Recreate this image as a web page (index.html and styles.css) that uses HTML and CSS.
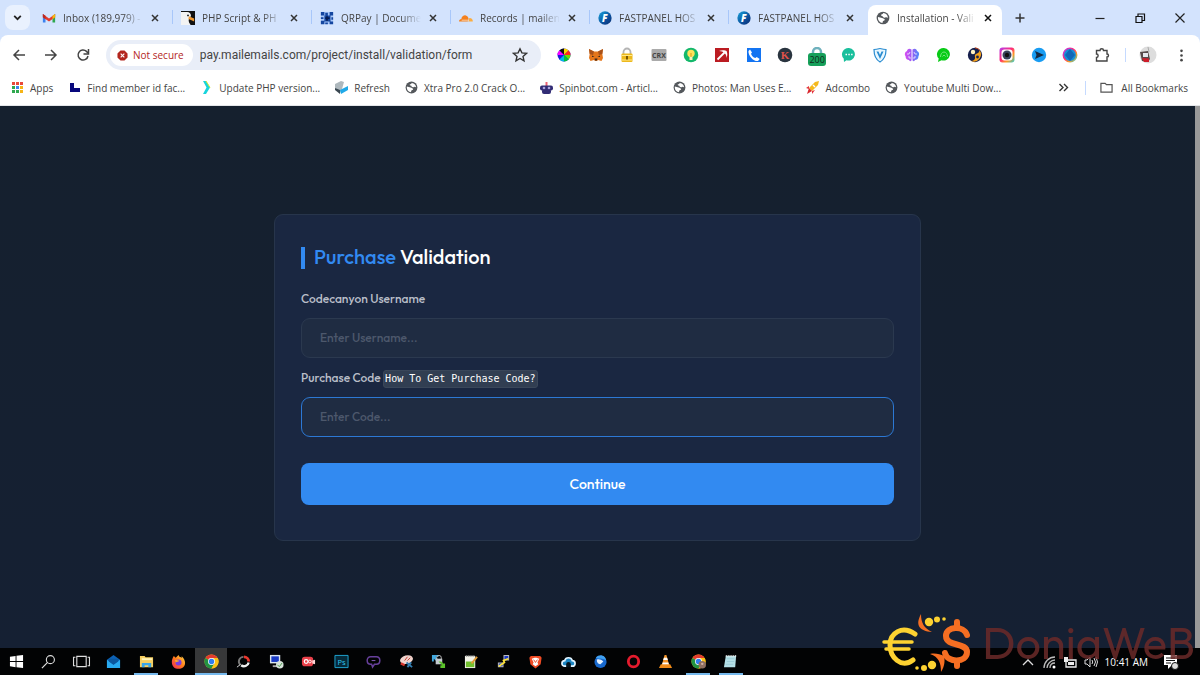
FILE: index.html
```html
<!DOCTYPE html>
<html lang="en">
<head>
<meta charset="utf-8">
<title>Installation - Validation</title>
<link rel="stylesheet" href="styles.css">
</head>
<body>
<svg class="defs" aria-hidden="true">
  <defs>
    <linearGradient id="fp" x1="0" x2="1" y1="0" y2="1"><stop offset="0" stop-color="#1aa5dc"/><stop offset=".6" stop-color="#0b4f9c"/><stop offset="1" stop-color="#0a2c70"/></linearGradient>
    <linearGradient id="ig" x1="0" x2="1" y1="0" y2="1"><stop offset="0" stop-color="#b23df0"/><stop offset=".45" stop-color="#ff2c78"/><stop offset=".7" stop-color="#ff9a1f"/><stop offset="1" stop-color="#25d0d8"/></linearGradient>
    <linearGradient id="brain" x1="0" x2="1"><stop offset="0" stop-color="#d94bf0"/><stop offset=".5" stop-color="#9a5cf5"/><stop offset="1" stop-color="#4a8cf8"/></linearGradient>
    <linearGradient id="fx" x1="1" x2="0" y1="0" y2="1"><stop offset="0" stop-color="#ffe14a"/><stop offset=".5" stop-color="#ff7a1c"/><stop offset="1" stop-color="#f0245e"/></linearGradient>
    <symbol id="close" viewBox="0 0 10 10"><path d="M2 2l6 6M8 2l-6 6" stroke="currentColor" stroke-width="1.5"/></symbol>
    <symbol id="globe" viewBox="1 1 22 22"><circle cx="12" cy="12" r="10" fill="#54585c"/><path fill="#fff" d="M4.200 10.500L9 11.500c2 .4 4 1 5.500 2.500.8 1-.2 2-1.500 2.300-1.200.3-1.500 1.500-1.800 3.600C7 19.500 4 16 4 12zM12.500 4.200c-.5 1.300-1.500 1.800-3 2.300-1 .5-.5 2 .7 2.200 1.500.2 2 .8 1.800 1.800 1.500 1.300 3 1 4.500.5 1.200-.4 2 .5 3.300.7C19.600 8 17 4.700 12.500 4.200z"/></symbol>
    <symbol id="fast" viewBox="0 0 16 16"><circle cx="8" cy="8" r="7.6" fill="url(#fp)"/><text x="4.6" y="12" font-family="Open Sans" font-size="11" font-weight="800" font-style="italic" fill="#fff">F</text></symbol>
    <symbol id="chrome" viewBox="0 0 16 16"><circle cx="8" cy="8" r="7.500" fill="#fbc116"/><path d="M1.500 4.200A7.500 7.500 0 0 1 14.500 4.200L8 8z" fill="#e33b2e"/><path d="M1.500 4.200A7.500 7.500 0 0 0 8 15.500l3-5.500-3-2z" fill="#229342"/><path d="M14.500 4.200H8V8l3 2-3 5.500a7.500 7.500 0 0 0 6.500-11.300z" fill="#fbc116"/><circle cx="8" cy="8" r="3.700" fill="#fff"/><circle cx="8" cy="8" r="2.900" fill="#2f7df0"/></symbol>
  </defs>
</svg>

<header class="browser">
  <div class="tabstrip">
    <button class="tab-search" aria-label="Search tabs"><svg viewBox="0 0 10 10"><path d="M2 3.500l3 3 3-3" fill="none" stroke="#222" stroke-width="1.600"/></svg></button>
    <div class="tabs">
      <div class="tab"><svg class="fav" viewBox="0 0 16 16"><path d="M1 3.500V13h3V7z" fill="#3b82f0"/><path d="M15 3.500V13h-3V7z" fill="#2fa84f"/><path d="M1 3.500l7 5 7-5v3.600l-7 5-7-5z" fill="#e33b2e"/><path d="M1 3.500l3 2v3.800L1 7z" fill="#b92b23"/><path d="M12 5.500l3-2V7l-3 2.300z" fill="#f6b90c"/></svg><span>Inbox (189,979) -</span><button aria-label="Close tab"><svg><use href="#close"/></svg></button></div>
      <div class="tab"><svg class="fav" viewBox="0 0 16 16"><path d="M0 0h16v16H0z" fill="#111"/><path d="M0 1h7c3 0 4.500 2 4.400 4.600L9 9c-1 3 1 5 2 7H0z" fill="#f3f3f3"/><path d="M9 6l6 2.500V12l-3-1.500L8.500 9z" fill="#f19a32"/><circle cx="8" cy="5" r="1" fill="#111"/></svg><span>PHP Script &amp; PH</span><button aria-label="Close tab"><svg><use href="#close"/></svg></button></div>
      <div class="tab"><svg class="fav" viewBox="0 0 16 16"><path d="M1 1h14v14H1z" fill="#a9c8fa"/><path d="M1 1h4v4H1zM6 2h3v3H6zM11 1h4v4h-4zM1 11h4v4H1zM5 5h7v7H5zM1 7h3v2H1zM13 7h2v3h-2zM11 12h4v3h-4zM6 13h3v2H6z" fill="#1446a0"/><path d="M8 6v5M6 8h5" stroke="#061c52" stroke-width="2"/></svg><span>QRPay | Docume</span><button aria-label="Close tab"><svg><use href="#close"/></svg></button></div>
      <div class="tab"><svg class="fav" viewBox="0 0 16 16"><path d="M0 12c0-2 1.200-3 2.700-3 .3-3 3-4.500 5-4 2 .4 3 2 3.300 4L10 12z" fill="#f4811f"/><path d="M10.500 12l1.300-4c2.500-.2 4 1.600 4 4z" fill="#fbad41"/><path d="M3 10.500h8" stroke="#fff" stroke-width=".7"/></svg><span>Records | mailen</span><button aria-label="Close tab"><svg><use href="#close"/></svg></button></div>
      <div class="tab"><svg class="fav"><use href="#fast"/></svg><span>FASTPANEL HOS</span><button aria-label="Close tab"><svg><use href="#close"/></svg></button></div>
      <div class="tab"><svg class="fav"><use href="#fast"/></svg><span>FASTPANEL HOS</span><button aria-label="Close tab"><svg><use href="#close"/></svg></button></div>
      <div class="tab active"><svg class="fav"><use href="#globe"/></svg><span>Installation - Vali</span><button aria-label="Close tab"><svg><use href="#close"/></svg></button></div>
    </div>
    <button class="new-tab" aria-label="New tab"><svg viewBox="0 0 12 12"><path d="M6 1.500v9M1.500 6h9" stroke="#333" stroke-width="1.500"/></svg></button>
    <div class="window-controls">
      <button aria-label="Minimize"><svg viewBox="0 0 12 12"><path d="M1.500 6.500h9" stroke="#222" stroke-width="1.200"/></svg></button>
      <button aria-label="Restore"><svg viewBox="0 0 12 12"><path d="M2 4.500h6v6H2zM4 4.500v-2.500h6.500v6.500H8" fill="none" stroke="#111" stroke-width="1.200"/></svg></button>
      <button aria-label="Close"><svg viewBox="0 0 12 12"><path d="M1.500 1.500l9 9M10.500 1.500l-9 9" stroke="#222" stroke-width="1.200"/></svg></button>
    </div>
  </div>

  <div class="toolbar">
    <div class="nav">
      <button aria-label="Back"><svg viewBox="0 0 14 14"><path d="M13 7H2M7 2L2 7l5 5" fill="none" stroke="#444" stroke-width="1.500"/></svg></button>
      <button aria-label="Forward"><svg viewBox="0 0 14 14"><path d="M1 7h11M7 2l5 5-5 5" fill="none" stroke="#444" stroke-width="1.500"/></svg></button>
      <button aria-label="Reload"><svg viewBox="0 0 14 14"><path d="M12 8a5 5 0 1 1-1.500-4.600L12 5" fill="none" stroke="#444" stroke-width="1.500"/><path d="M12.500 1v5h-5" fill="none" stroke="#444" stroke-width="1.500"/></svg></button>
    </div>
    <div class="omnibox">
      <button class="security"><svg viewBox="0 0 12 12"><path d="M3.800.5h4.400l3.300 3.300v4.400l-3.300 3.300H3.800L.5 8.200V3.800z" fill="#b3261e"/><path d="M4 4l4 4M8 4L4 8" stroke="#fff" stroke-width="1.200"/></svg>Not secure</button>
      <input type="text" aria-label="Address" value="pay.mailemails.com/project/install/validation/form">
      <button class="star" aria-label="Bookmark"><svg viewBox="0 0 16 16"><path d="M8 1.800l1.900 4.100 4.500.5-3.400 3 1 4.400L8 11.500l-4 2.300 1-4.400-3.400-3 4.500-.5z" fill="none" stroke="#333" stroke-width="1.400"/></svg></button>
    </div>
    <div class="extensions">
      <svg viewBox="0 0 16 16"><circle cx="8" cy="8" r="6.500" fill="#1a1ad8"/><path d="M8 8V1.500A6.500 6.500 0 0 1 12.600 3.400z" fill="#ffd500"/><path d="M8 8V1.500A6.500 6.500 0 0 0 3.400 3.400z" fill="#111"/><path d="M8 8L3.400 3.400A6.500 6.500 0 0 0 1.500 8z" fill="#f0f"/><path d="M8 8l4.600-4.600A6.500 6.500 0 0 1 14.500 8z" fill="#ff2a1a"/><path d="M8 8h6.500a6.500 6.500 0 0 1-1.900 4.600z" fill="#6be000"/><path d="M8 8l4.600 4.600A6.500 6.500 0 0 1 8 14.500z" fill="#00c43c"/><path d="M8 8v6.500a6.500 6.500 0 0 1-4.600-1.900z" fill="#00b8e8"/></svg>
      <svg viewBox="0 0 16 16"><path d="M1 2l5 2.500h4L15 2l-.7 5 .7 4-1.500 3-3.500-1-1 1H7l-1-1-3.500 1L1 11l.7-4z" fill="#e4761b"/><path d="M1 2l5 2.500L5 8 1.700 7zM15 2l-5 2.500 1 3.500 3.300-1z" fill="#a8511a"/><path d="M4 8.500l2.500 1.500L4 10zM12 8.500L9.500 10l2.500 0zM6.500 11.500h3l-.5 2H7z" fill="#3b2b25"/></svg>
      <svg viewBox="0 0 16 16"><path d="M4.500 8V5a3.500 3.500 0 0 1 7 0v3" fill="none" stroke="#b4b4b4" stroke-width="1.800"/><rect x="2.500" y="6.500" width="11" height="8.500" rx="1" fill="#edb91c"/><path d="M3 8.500h10M3 13h10" stroke="#ffe889"/><path d="M8 9v3.500" stroke="#6a4b00" stroke-width="1.800"/></svg>
      <svg viewBox="0 0 16 16"><rect x=".5" y="2" width="15" height="12" rx="1" fill="#aaa"/><text x="8" y="11" text-anchor="middle" font-family="Open Sans" font-size="7" font-weight="700" fill="#444">CRX</text></svg>
      <svg viewBox="0 0 16 16"><circle cx="8" cy="8" r="7.300" fill="#14b86b"/><circle cx="8" cy="6.500" r="3.700" fill="#ffe25a"/><path d="M6.500 9.500h3V13h-3z" fill="#f7f0ba"/><path d="M8 6v4" stroke="#e09b16"/></svg>
      <svg viewBox="0 0 16 16"><path d="M1 1h14v14H1z" fill="#bb1c22"/><path d="M3.500 12.500l7-7" stroke="#fff" stroke-width="1.800"/><path d="M5 4c3-1.500 7-.5 7.500 0s1.500 4 0 7c.3-4-3-7-7.500-7z" fill="#fff"/></svg>
      <svg viewBox="0 0 16 16"><path d="M1 1h14v14H1z" fill="#1374f2"/><path d="M4 2.500l2 3-1 1.200c.8 2.200 2.200 3.500 4.400 4.400l1.300-1 3 2-1.700 2C7.500 14.500 2 9 2.500 4z" fill="#fff"/></svg>
      <svg viewBox="0 0 16 16"><circle cx="8" cy="8" r="7.300" fill="#29343f"/><text x="8" y="12" text-anchor="middle" font-family="Liberation Serif" font-size="11" font-weight="700" fill="#e0524a">K</text></svg>
      <span class="badged"><svg viewBox="0 0 16 16"><path d="M4 8V5a4 4 0 0 1 8 0v3" fill="none" stroke="#6fb1bd" stroke-width="2.500"/></svg><b>200</b></span>
      <svg viewBox="0 0 16 16"><path d="M8 1a6.500 6.300 0 1 1-2.500 12.300L3 15l-.3-3.500A6.500 6.300 0 0 1 8 1z" fill="#19bf9c"/><path d="M4.500 7.500h1.500M7.300 7.500h1.500M10.100 7.500h1.500" stroke="#fff" stroke-width="1.300"/></svg>
      <svg viewBox="0 0 16 16"><path d="M2 2.500c4 0 5-1 6-1s2 1 6 1C14 9 11.500 13 8 15 4.500 13 2 9 2 2.500z" fill="#e8f7ff" stroke="#288bd0" stroke-width="1.200"/><path d="M4.500 4.500L8 12l3.500-7.500H9.500L8 8 6.500 4.500z" fill="#288bd0"/></svg>
      <svg viewBox="0 0 16 16"><path d="M7.500 2.500C5 .5 3 2.500 3 4 .5 5 .5 8 1.500 9c0 3 2 4 3.500 4 1 2 2.500 1 2.500 0zM8.500 2.500C11 .5 13 2.500 13 4c2.500 1 2.500 4 1.500 5 0 3-2 4-3.500 4-1 2-2.500 1-2.500 0z" fill="url(#brain)"/><path d="M3 7h2l1-2M4 10h2v2M13 7h-2l-1-2M12 10h-2v2" fill="none" stroke="#fff" stroke-width=".7"/></svg>
      <svg viewBox="0 0 16 16"><path d="M8 1a6.500 6.300 0 1 1-2.500 12.300L2 15l.7-3.500A6.500 6.300 0 0 1 8 1z" fill="#09cb17"/><path d="M4.500 10c0-3 1.500-5 3.500-5s3.500 2 3.500 5M6.500 9.500L8 8l1.500 1.500" fill="none" stroke="#7fe986" stroke-width=".9"/></svg>
      <svg viewBox="0 0 16 16"><circle cx="8" cy="8" r="7.200" fill="#17204d"/><path d="M12.500 3A7.200 7.200 0 0 1 4 14c3 0 4.500-2 4-4-.4-1.700 0-3 2-3.500 1.500-.5 2.500-1.500 2.500-3.500z" fill="#f5a21c"/><path d="M8 .8a7.200 7.200 0 0 1 4.500 2.200" stroke="#d04a1c" fill="none"/><circle cx="6" cy="5" r="2.200" fill="#fff0c0"/><circle cx="10.500" cy="10" r="1.400" fill="#17204d"/></svg>
      <svg viewBox="0 0 16 16"><rect x=".5" y=".5" width="15" height="15" rx="3" fill="url(#ig)"/><rect x="2.500" y="2.500" width="11" height="11" rx="3" fill="#fff"/><circle cx="8" cy="8" r="4.500" fill="#39445c"/><circle cx="8" cy="8" r="2.200" fill="#111"/></svg>
      <svg viewBox="0 0 16 16"><circle cx="8" cy="8" r="7.200" fill="#189cf2"/><path d="M4 4l9 4-9 4 1.500-4z" fill="#132a44"/></svg>
      <svg viewBox="0 0 16 16"><circle cx="8" cy="8" r="6.700" fill="#1590d7" stroke="url(#ig)" stroke-width="1.500"/><path d="M8 2l5 6-5 6-5-6z" fill="#1167b7"/></svg>
      <svg viewBox="0 0 16 16"><path d="M2.500 3.500H6c0-2.300 3.500-2.300 3.500 0H13V7c2 0 2 3 0 3v4H2.500v-3.500c2.200 0 2.200-3.500 0-3.500z" fill="none" stroke="#444" stroke-width="1.400"/></svg>
    </div>
    <div class="profile">
      <svg class="avatar" viewBox="0 0 18 18"><circle cx="9" cy="9" r="8.500" fill="#ddd"/><path d="M1 6l8-1 2 8-2 3-6-1z" fill="#574b4b"/><path d="M4 7h5v4H4z" fill="#e5e8ed"/><path d="M3 12l7 .5V16l-5 0z" fill="#ce1d2a"/><path d="M9 1l1 5" stroke="#aaa"/></svg>
      <button aria-label="Menu"><svg viewBox="0 0 14 14"><circle cx="7" cy="2" r="1.400"/><circle cx="7" cy="7" r="1.400"/><circle cx="7" cy="12" r="1.400"/></svg></button>
    </div>
  </div>

  <nav class="bookmarks">
    <a href="#"><svg viewBox="0 0 13 13"><path d="M1 1h3v3H1zM5 1h3v3H5zM9 1h3v3H9z" fill="#e9483b"/><path d="M1 5h3v3H1z" fill="#2fa84f"/><path d="M5 5h3v3H5z" fill="#3d84f0"/><path d="M9 5h3v3H9zM9 9h3v3H9z" fill="#f6b416"/><path d="M1 9h3v3H1zM5 9h3v3H5z" fill="#2fa84f"/></svg><span>Apps</span></a>
    <a href="#"><svg viewBox="0 0 13 13"><path d="M2 2h4v5h6v4H2z" fill="#08087c"/></svg><span class="long">Find member id fac...</span></a>
    <a href="#"><svg viewBox="0 0 13 13"><path d="M3 0h3l4 6.500L6 13H3l3.500-6.500z" fill="#17d4dc"/><path d="M6 0l4 6.500" stroke="#d6e829"/></svg><span class="long">Update PHP version...</span></a>
    <a href="#"><svg viewBox="0 0 13 13"><path d="M0 3l6-3 3 1-2 7-2 4-5-5z" fill="#aeb8bd"/><path d="M0 7l5 2v4L0 9z" fill="#394650"/><path d="M5 9l8-4v4l-7 4z" fill="#20a9e8"/></svg><span>Refresh</span></a>
    <a href="#"><svg><use href="#globe"/></svg><span class="long">Xtra Pro 2.0 Crack O...</span></a>
    <a href="#"><svg viewBox="0 0 13 13"><path d="M6.500 1v4" stroke="#ec6475" stroke-width="2"/><rect x="0" y="4.500" width="13" height="5" rx="2" fill="#322c75"/><rect x="2" y="8" width="9" height="5" rx="2" fill="#322c75"/><circle cx="4" cy="7" r="1.300" fill="#aaa3dd"/><circle cx="9" cy="7" r="1.300" fill="#aaa3dd"/></svg><span class="long">Spinbot.com - Articl...</span></a>
    <a href="#"><svg><use href="#globe"/></svg><span class="long">Photos: Man Uses E...</span></a>
    <a href="#"><svg viewBox="0 0 13 13"><path d="M13 0L9 1 3 7l3 3 6-6z" fill="#f5b91d"/><path d="M3 5L0 7l3 1zM6 10l0 3 3-4z" fill="#e4313c"/><path d="M3 7l3 3-5 3z" fill="#d9272f"/><path d="M7 4l2 2" stroke="#fff" stroke-width="1.500"/></svg><span>Adcombo</span></a>
    <a href="#"><svg><use href="#globe"/></svg><span class="long">Youtube Multi Dow...</span></a>
    <button class="more" aria-label="More bookmarks"><svg viewBox="0 0 13 13"><path d="M2.500 3l3.500 3.500L2.500 10M7 3l3.500 3.500L7 10" fill="none" stroke="#333" stroke-width="1.400"/></svg></button>
    <a href="#" class="all"><svg viewBox="0 0 14 13"><path d="M1 2h4.500L7 3.500h6v8H1z" fill="none" stroke="#555" stroke-width="1.300"/></svg><span>All Bookmarks</span></a>
  </nav>
</header>

<main class="page">
  <form class="card">
    <h1><em>Purchase</em> Validation</h1>
    <label for="username">Codecanyon Username</label>
    <input id="username" type="text" placeholder="Enter Username...">
    <label for="code">Purchase Code <code>How To Get Purchase Code?</code></label>
    <input id="code" class="focused" type="text" placeholder="Enter Code...">
    <button type="button">Continue</button>
  </form>
</main>

<footer class="taskbar">
  <div class="apps">
    <button aria-label="Start"><svg viewBox="0 0 16 16"><path d="M1 3l6-1v5.500H1zM8 1.900L15 1v6.500H8zM1 8.500h6V14l-6-1zM8 8.500h7V15l-7-.9z" fill="#fff"/></svg></button>
    <button aria-label="Search"><svg viewBox="0 0 16 16"><circle cx="10" cy="6" r="4.300" fill="none" stroke="#ddd" stroke-width="1.200"/><path d="M7 9l-6 6" stroke="#ddd" stroke-width="1.300"/></svg></button>
    <button aria-label="Task view"><svg class="wide" viewBox="0 0 20 16"><path d="M5 2.500h10v11H5zM3.500 3.500h-2v9h2M16.500 3.500h2v9h-2" fill="none" stroke="#ddd" stroke-width="1.200"/></svg></button>
    <button aria-label="Mail"><svg viewBox="0 0 16 16"><path d="M1 6l7-5 7 5v9H1z" fill="#0c61b4"/><path d="M1 6l7 5.500L15 6v9H1z" fill="#28aaf0"/><path d="M3 5h10v3l-5 3.500L3 8z" fill="#0b579e"/></svg></button>
    <button aria-label="Explorer" class="open"><svg viewBox="0 0 16 16"><path d="M1 2h5l1 1.500h8V14H1z" fill="#f5cf61"/><path d="M3 4.500h11v2H3z" fill="#fff3b8"/><path d="M3 14V9.500h10V14h-3v-2H6v2z" fill="#37a5e9"/></svg></button>
    <button aria-label="Firefox"><svg viewBox="0 0 16 16"><path d="M3 2l2 2 3-3 1 2 3 1-1-2c4 3 5 8 3 11-3 4-9 3-11 1C-.5 10 1 5 3 2z" fill="url(#fx)"/><circle cx="8" cy="9" r="3.200" fill="#7a3ee0"/><path d="M4 6c3 0 3 1 5 1-1 2-3 1-4 2" fill="#ffae22"/></svg></button>
    <button aria-label="Chrome" class="open current"><svg><use href="#chrome"/></svg></button>
    <button aria-label="Media recorder"><svg viewBox="0 0 16 16"><path d="M4.500 11.500A5 5 0 0 1 8 3" fill="none" stroke="#777" stroke-width="2"/><path d="M8.500 3a5 5 0 0 1 5 5" fill="none" stroke="#e8372e" stroke-width="3"/><path d="M13.500 9a5 5 0 0 1-8 3" fill="none" stroke="#eee" stroke-width="2.500"/><path d="M1 14l4-3" stroke="#ddd"/></svg></button>
    <button aria-label="Remote desktop"><svg viewBox="0 0 16 16"><path d="M1 1h11v9H1z" fill="#dce6ee"/><path d="M2.500 2.500h8v6h-8z" fill="#193ac5"/><path d="M4 12h6v2H4z" fill="#aaa"/><circle cx="11.500" cy="11.500" r="4" fill="#d8e4dc"/><path d="M9 11.500l2 2 3-4" fill="none" stroke="#4a9b4a"/></svg></button>
    <button aria-label="Screen recorder"><svg viewBox="0 0 16 16"><rect x="1" y="3" width="12" height="10" rx="3" fill="#e9404a"/><path d="M12 7l3-1v5l-3-1z" fill="#ffd6d6"/><circle cx="5.500" cy="8" r="2" fill="none" stroke="#fff" stroke-width="1.300"/><circle cx="9.500" cy="8" r="1.500" fill="none" stroke="#fff"/></svg></button>
    <button aria-label="Photoshop"><svg viewBox="0 0 16 16"><path d="M1 1.500h14v13H1z" fill="#052a3a" stroke="#20aad7"/><text x="8" y="11.500" text-anchor="middle" font-family="Open Sans" font-size="8" fill="#31c5f0">Ps</text></svg></button>
    <button aria-label="Chat"><svg viewBox="0 0 16 16"><path d="M5 3h6c5 0 5 8 0 8H9l-2 3-1-3H5C0 11 0 3 5 3z" fill="none" stroke="#67409b" stroke-width="1.600"/><path d="M6 7h4" stroke="#8d61c2"/></svg></button>
    <button aria-label="Snipping tool"><svg viewBox="0 0 16 16"><ellipse cx="8" cy="6" rx="7" ry="4.500" fill="#f0d3cc" transform="rotate(-15 8 6)"/><path d="M6 7l3-4M9 7l3-3" stroke="#c43c32" fill="none"/><path d="M8 9l6 5M13 9l-4 5" stroke="#347eb1" stroke-width="2"/><path d="M2 10l4 2" stroke="#d6342b" stroke-width="2.500"/></svg></button>
    <button aria-label="Transfer"><svg viewBox="0 0 16 16"><path d="M1 1h7v2H5l3 3-2 2-3-3v3H1z" fill="#42a9df"/><path d="M5 5h7v6H5z" fill="#c5cbd1"/><path d="M6 6V4a2 2 0 0 1 5 0v2" fill="none" stroke="#bbb"/><path d="M8 8l4 4h-2v3h5v-5h-2l-2-2z" fill="#5bc32b"/></svg></button>
    <button aria-label="Notepad editor"><svg viewBox="0 0 16 16"><path d="M1 2h11v13H1z" fill="#f2f2e9"/><path d="M2 8h9v6H2z" fill="#72c02f"/><path d="M2 2h10" stroke="#777" stroke-width="2" stroke-dasharray="1 1"/><path d="M8 10l6-7" stroke="#e09a34" stroke-width="2"/></svg></button>
    <button aria-label="Terminal session"><svg viewBox="0 0 16 16"><path d="M8 1h6v6H8zM2 9h6v5H2z" fill="#bbb"/><path d="M9 2h4v4H9zM3 10h4v3H3z" fill="#1939c9"/><path d="M13 5L8 7l1 2-6 4" fill="none" stroke="#ffe43a" stroke-width="1.800"/></svg></button>
    <button aria-label="Brave"><svg viewBox="0 0 16 16"><path d="M3 2h10l1.500 2-1 7L8 15.500 2.500 11l-1-7z" fill="#f04b24"/><path d="M4 5l3-1h2l3 1-2 4 1 2-3 2-3-2 1-2z" fill="#fff"/><path d="M6 6l2 3 2-3" fill="none" stroke="#f04b24"/></svg></button>
    <button aria-label="Cloud"><svg viewBox="0 0 16 16"><path d="M4 13a3 3 0 0 1 0-6c1-4 7-4 8 0a3 3 0 0 1 0 6z" fill="#1c86c4" stroke="#e3f4ff" stroke-width="1.800"/><path d="M5.500 14V11a2.500 2.500 0 0 1 5 0v3z" fill="#05131c"/></svg></button>
    <button aria-label="Thunderbird"><svg viewBox="0 0 16 16"><circle cx="8" cy="8.500" r="6.500" fill="#1869ce"/><path d="M4 6c2-1 5 0 7 2l-3 3c-2 0-4-2-4-5z" fill="#e6f2ff"/><path d="M3 4c4-5 11-2 11 3-3-3-6-1-11-3z" fill="#3fa0f2"/></svg></button>
    <button aria-label="Opera"><svg viewBox="0 0 16 16"><ellipse cx="8" cy="8" rx="5.500" ry="5.800" fill="none" stroke="#e41b2d" stroke-width="3"/></svg></button>
    <button aria-label="VLC"><svg viewBox="0 0 16 16"><path d="M3 11h10l2 4H1z" fill="#f08a18"/><path d="M7 1h2l3 11H4z" fill="#f3942a"/><path d="M6.300 4h3.400l.8 2.500h-5zM5 9h6l.6 2H4.400z" fill="#fff"/></svg></button>
    <button aria-label="Chrome profile" class="open"><svg viewBox="0 0 16 16"><use href="#chrome"/><circle cx="12" cy="11.500" r="4" fill="#8d6e60"/><circle cx="12" cy="10.500" r="1.300" fill="#d0aea0"/></svg></button>
    <button aria-label="Notepad" class="open"><svg viewBox="0 0 16 16"><path d="M3 2h11l-1 12H1z" fill="#b4dfe6"/><path d="M4 5h8M4 8h8M3 11h8" stroke="#9cccd6"/><path d="M3 2h11" stroke="#eee" stroke-width="2" stroke-dasharray="1 1"/></svg></button>
  </div>
  <div class="tray">
    <svg viewBox="0 0 14 14"><path d="M2 10l5-5 5 5" fill="none" stroke="#ddd" stroke-width="1.300"/></svg>
    <svg viewBox="0 0 14 14"><path d="M2 13C2 7 7 2 13 2M5 13c0-4 4-8 8-8M8 13c0-3 2-5 5-5" fill="none" stroke="#bbb" stroke-width="1.300"/><circle cx="12" cy="12" r="1.500" fill="#fff"/></svg>
    <svg viewBox="0 0 14 14"><path d="M3 5h10v7H3z" fill="none" stroke="#eee" stroke-width="1.300"/><path d="M5 7h6v3H5zM1 2h4v5H1z" fill="#eee"/></svg>
    <svg viewBox="0 0 14 14"><path d="M1 5h2l3-3v10L3 9H1z" fill="none" stroke="#ddd"/><path d="M8 5q1.500 2 0 4M10 3q3 4 0 8M12 2q3 5 0 10" fill="none" stroke="#ddd"/></svg>
    <time>10:41 AM</time>
    <svg class="notice" viewBox="0 0 16 16"><path d="M1 1h13v10H9l-4 4v-4H1z" fill="#fff"/><path d="M3 4h9M3 6.500h9M3 9h5" stroke="#111"/><circle cx="12" cy="12" r="3.500" fill="#ddd" stroke="#111"/></svg>
  </div>
</footer>

<div class="watermark">
  <svg viewBox="0 0 90 60" aria-hidden="true">
    <g fill="none" stroke-linecap="round">
      <path d="M33 21C20 12 8 20 8 32s11 24 23 15" stroke="#fdd231" stroke-width="5"/>
      <path d="M2 29h28M4 36h23" stroke="#fdd231" stroke-width="3.500"/>
      <path d="M85 22c-3-10-21-9-21 1 0 11 21 6 21 16 0 11-20 11-22 1M75 12V9M75 49v4" stroke="#f56e22" stroke-width="6"/>
    </g>
    <path d="M39 1c-6 11-2 17 11 18-8-4-11-9-11-18z" fill="#f56e22"/>
    <path d="M48 41c9 3 11 9 11 18 4-6 4-12 3-16-4-2-9-3-14-2z" fill="#f56e22"/>
    <g fill="#fdd231"><circle cx="47" cy="9" r="4.200"/><circle cx="55" cy="6.500" r="3"/><circle cx="62" cy="6" r="1.800"/><circle cx="50" cy="52" r="4.200"/><circle cx="42" cy="55" r="3"/><circle cx="35" cy="55" r="1.800"/></g>
  </svg>
  <span>DoniaWeB</span>
</div>
</body>
</html>
```
FILE: styles.css
```css
* { box-sizing: border-box; }

body {
  margin: 0;
  min-height: 100vh;
  display: flex;
  flex-direction: column;
  position: relative;
  background: #152031;
  font-family: "Open Sans", "Noto Sans", sans-serif;
  font-size: 10px;
  color: #444;
}

button {
  border: 0;
  padding: 0;
  background: none;
  color: inherit;
  font: inherit;
  display: flex;
  align-items: center;
  justify-content: center;
}

svg { display: block; flex: none; }
.defs { position: absolute; width: 0; height: 0; }

/* Browser frame */
.browser { background: #d3e3fd; }

.tabstrip {
  display: flex;
  align-items: center;
  height: 35px;
  padding-left: 5px;
}

.tab-search {
  width: 25px;
  height: 25px;
  border-radius: 8px;
  background: #e9f1fe;
}
.tab-search svg { width: 11px; height: 11px; }

.tabs {
  display: flex;
  align-self: stretch;
  flex: 0 1 972px;
  padding-left: 4px;
  min-width: 0;
}

.tab {
  flex: 0 1 139px;
  min-width: 0;
  display: flex;
  align-items: center;
  gap: 7px;
  padding: 0 13px 5px 8px;
  margin-top: 5px;
  background: linear-gradient(#a8c7fa, #a8c7fa) right 0 top 5px / 1px 14px no-repeat;
}
.tab span {
  flex: 1;
  min-width: 0;
  overflow: hidden;
  white-space: nowrap;
  mask-image: linear-gradient(to right, #000 75%, transparent);
}
.tab button, .tab button svg { width: 10px; height: 10px; }
.tab button { color: #333; }
.fav { width: 14px; height: 14px; }
.tab.active {
  flex-basis: 134px;
  padding-right: 9px;
  background: #fff;
  border-radius: 8px 8px 0 0;
}
.tab.active button { color: #111; }
.tab:nth-last-child(2) { background: none; }

.new-tab { width: 35px; height: 25px; }
.new-tab svg, .window-controls svg { width: 12px; height: 12px; }
.window-controls { display: flex; margin-left: auto; align-self: stretch; }
.window-controls button { width: 40px; }

.toolbar {
  display: flex;
  align-items: center;
  height: 40px;
  padding: 0 9px 0 3px;
  background: #fff;
  border-radius: 8px 8px 0 0;
}
.nav { display: flex; margin-right: 7px; }
.nav button { width: 32px; height: 30px; }
.nav svg { width: 14px; height: 14px; }

.omnibox {
  flex: 1;
  min-width: 0;
  display: flex;
  align-items: center;
  height: 30px;
  padding: 0 13px 0 4px;
  border-radius: 15px;
  background: #e9eef8;
}
.security {
  height: 22px;
  padding: 0 9px 0 7px;
  gap: 5px;
  border-radius: 11px;
  background: #fff;
  color: #b3261e;
  white-space: nowrap;
}
.security svg { width: 11px; height: 11px; }
.omnibox input {
  flex: 1;
  min-width: 0;
  border: 0;
  padding: 0 0 0 7px;
  background: none;
  font-family: Roboto, sans-serif;
  font-size: 12px;
  color: #444;
}
.star svg { width: 16px; height: 16px; }

.extensions {
  flex: 0 1 554px;
  display: flex;
  justify-content: space-between;
  margin: 0 15px;
}
.extensions svg { width: 16px; height: 16px; }
.badged { position: relative; width: 16px; }
.badged b {
  position: absolute;
  top: 6px;
  left: -1px;
  width: 18px;
  border-radius: 3px;
  background: #16a05a;
  color: #10281a;
  font-size: 9px;
  font-weight: 400;
  line-height: 13px;
  text-align: center;
}

.profile {
  display: flex;
  align-items: center;
  gap: 14px;
  padding-left: 14px;
  background: linear-gradient(#c5daff, #c5daff) left center / 1px 14px no-repeat;
}
.avatar { width: 18px; height: 18px; }
.profile button { width: 20px; }
.profile button svg { width: 13px; height: 13px; fill: #444; }

.bookmarks {
  display: flex;
  align-items: center;
  gap: 15px;
  height: 31px;
  padding: 0 12px 5px 11px;
  background: #fff;
  border-bottom: 1px solid #e4e6e9;
}
.bookmarks a {
  display: flex;
  align-items: center;
  gap: 6px;
  color: #444;
  text-decoration: none;
  white-space: nowrap;
}
.bookmarks svg { width: 13px; height: 13px; }
.bookmarks .long { min-width: 98px; }
.more { margin-left: auto; }
.bookmarks .all {
  padding-left: 15px;
  gap: 8px;
  background: linear-gradient(#c5daff, #c5daff) left center / 1px 14px no-repeat;
}

/* Page */
.page {
  flex: 1;
  display: flex;
  align-items: center;
  justify-content: center;
  padding: 17px 16px 16px;
  background: linear-gradient(#15202e, #152033);
  border-right: 5px solid #999;
  font-family: Outfit, Lato, sans-serif;
}

.card {
  width: 100%;
  max-width: 647px;
  padding: 32px 26px 35px;
  border: 1px solid #27354b;
  border-radius: 9px;
  background: #1a2741;
  color: #b9bec8;
  font-size: 12px;
  font-weight: 500;
}
.card h1 {
  margin: 0 0 20px;
  padding-left: 9px;
  border-left: 4px solid #328af1;
  color: #fff;
  font-size: 20px;
  font-weight: 500;
  line-height: 20px;
  padding-bottom: 2px;
}
.card em { color: #328af1; font-style: normal; }
.card label { display: block; height: 20px; line-height: 20px; }
.card code {
  display: inline-block;
  padding: 0 1px;
  border: 1px solid #3a475a;
  border-radius: 3px;
  background: #313e52;
  color: #fff;
  font-family: Consolas, "DejaVu Sans Mono", monospace;
  font-size: 10px;
  font-weight: 400;
  line-height: 16px;
}
.card input {
  display: block;
  width: 100%;
  height: 40px;
  margin: 9px 0 10px;
  padding: 0 18px 1px;
  border: 1px solid #2b394f;
  border-radius: 9px;
  outline: 0;
  background: #1f2c42;
  color: #fff;
  font: inherit;
}
.card input::placeholder { color: #4d586c; opacity: 1; }
.card input.focused { border-color: #2c78d4; }
.card button {
  width: 100%;
  height: 42px;
  margin-top: 26px;
  border-radius: 8px;
  background: #328af1;
  color: #fff;
  font-size: 14px;
  font-weight: 500;
}

/* Taskbar */
.taskbar {
  display: flex;
  justify-content: space-between;
  height: 27px;
  background: #020304;
}
.apps { display: flex; flex: 0 1 747px; }
.apps button { flex: 1; }
.apps svg { width: 15px; height: 15px; }
.apps svg.wide { width: 19px; }
.apps .open {
  background: linear-gradient(#76b9ed, #76b9ed) center bottom / 24px 2px no-repeat;
}
.apps .current { background-color: #373839; background-size: 100% 2px; }

.tray {
  display: flex;
  align-items: center;
  gap: 7px;
  padding-right: 21px;
  color: #fff;
}
.tray svg { width: 14px; height: 14px; }
.tray time { white-space: nowrap; }
.tray .notice { width: 16px; height: 16px; margin-left: 8px; }

.watermark {
  position: absolute;
  right: 5px;
  bottom: 2px;
  display: flex;
  align-items: center;
  gap: 10px;
  pointer-events: none;
}
.watermark svg { width: 90px; height: 60px; }
.watermark span {
  color: #6b2a29;
  opacity: .85;
  font-family: Outfit, Lato, sans-serif;
  font-size: 45px;
  font-weight: 400;
  line-height: 54px;
}
```
